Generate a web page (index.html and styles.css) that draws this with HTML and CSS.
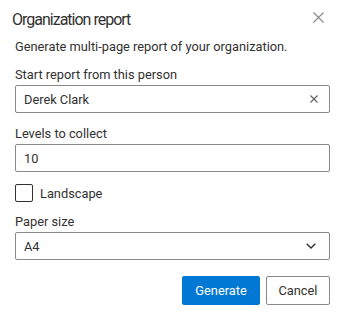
FILE: index.html
```html
<!DOCTYPE html>
<html lang="en">
<head>
   <meta charset="UTF-8">
   <meta name="viewport" content="width=device-width, initial-scale=1.0">
   <title>Organization report</title>
   <link rel="stylesheet" href="styles.css">
</head>
<body>
   <div class="dialog">
       <div class="dialog-header">
           <h1>Organization report</h1>
           <button class="close-btn" aria-label="Close">
               <svg width="11" height="11" viewBox="0 0 11 11"><path d="M0.5 0.5 L10.5 10.5 M10.5 0.5 L0.5 10.5" stroke="#8a8886" stroke-width="1.1" fill="none"/></svg>
           </button>
       </div>
       <p class="description">Generate multi-page report of your organization.</p>

       <div class="field first">
           <label for="person">Start report from this person</label>
           <div class="text-input">
               <input type="text" id="person" value="Derek Clark">
               <span class="clear-btn">
                   <svg width="8" height="8" viewBox="0 0 8 8"><path d="M0.5 0.5 L7.5 7.5 M7.5 0.5 L0.5 7.5" stroke="#605e5c" stroke-width="1.1" fill="none"/></svg>
               </span>
           </div>
       </div>

       <div class="field">
           <label for="levels">Levels to collect</label>
           <div class="text-input">
               <input type="text" id="levels" value="10">
           </div>
       </div>

       <label class="checkbox">
           <span class="box"></span>
           <span>Landscape</span>
       </label>

       <div class="field paper">
           <label>Paper size</label>
           <div class="dropdown">
               <span>A4</span>
               <svg width="10" height="6" viewBox="0 0 10 6"><path d="M0.7 0.7 L5 5 L9.3 0.7" stroke="#323130" stroke-width="1.4" fill="none"/></svg>
           </div>
       </div>

       <div class="actions">
           <button class="btn primary">Generate</button>
           <button class="btn cancel">Cancel</button>
       </div>
   </div>
</body>
</html>
```

FILE: styles.css
```css
body {
    margin: 0;
    background: #ffffff;
    font-family: "Segoe UI", Roboto, sans-serif;
    font-size: 12.8px;
    color: #323130;
}

.dialog {
    padding: 8px 14px 0 15px;
}

/* Заголовок */
.dialog-header {
    display: flex;
    justify-content: space-between;
    height: 24px;
    margin-left: -3px;
}

h1 {
    margin: 0;
    font-size: 16px;
    font-weight: 400;
    letter-spacing: -1px;
    line-height: 24px;
}

.close-btn {
    border: none;
    background: none;
    padding: 0;
    margin: 4px 6px 0 0;
    height: 11px;
    display: flex;
}

.description {
    margin: 5px 0 0;
    line-height: 20px;
}

/* Поля */
.field {
    margin-top: 11px;
    display: flex;
    flex-direction: column;
}

.field.first {
    margin-top: 8px;
}

.field label {
    line-height: 20px;
}

.text-input {
    display: flex;
    align-items: center;
    height: 28px;
    border: 1px solid #8a8886;
    border-radius: 2px;
    box-sizing: border-box;
    padding: 0 11px 0 8px;
}

.text-input input {
    flex: 1;
    min-width: 0;
    border: none;
    outline: none;
    padding: 0;
    font: inherit;
    color: #323130;
    background: none;
}

.clear-btn {
    display: flex;
}

.checkbox {
    display: flex;
    align-items: center;
    gap: 7px;
    margin-top: 12px;
    height: 18px;
}

.box {
    width: 18px;
    height: 18px;
    box-sizing: border-box;
    border: 1px solid #323130;
    border-radius: 2px;
}

.field.paper {
    margin-top: 10px;
}

.dropdown {
    display: flex;
    align-items: center;
    justify-content: space-between;
    height: 28px;
    border: 1px solid #8a8886;
    border-radius: 2px;
    box-sizing: border-box;
    padding: 0 13px 0 8px;
}

/* Кнопки */
.actions {
    display: flex;
    justify-content: flex-end;
    gap: 6px;
    margin-top: 16px;
}

.btn {
    height: 29px;
    padding: 0;
    border: 1px solid #8a8886;
    border-radius: 2px;
    background: #ffffff;
    color: #323130;
    font: inherit;
}

.btn.primary {
    width: 78px;
    background: #0078d4;
    border-color: #0078d4;
    color: #ffffff;
}

.btn.cancel {
    width: 64px;
}
```
